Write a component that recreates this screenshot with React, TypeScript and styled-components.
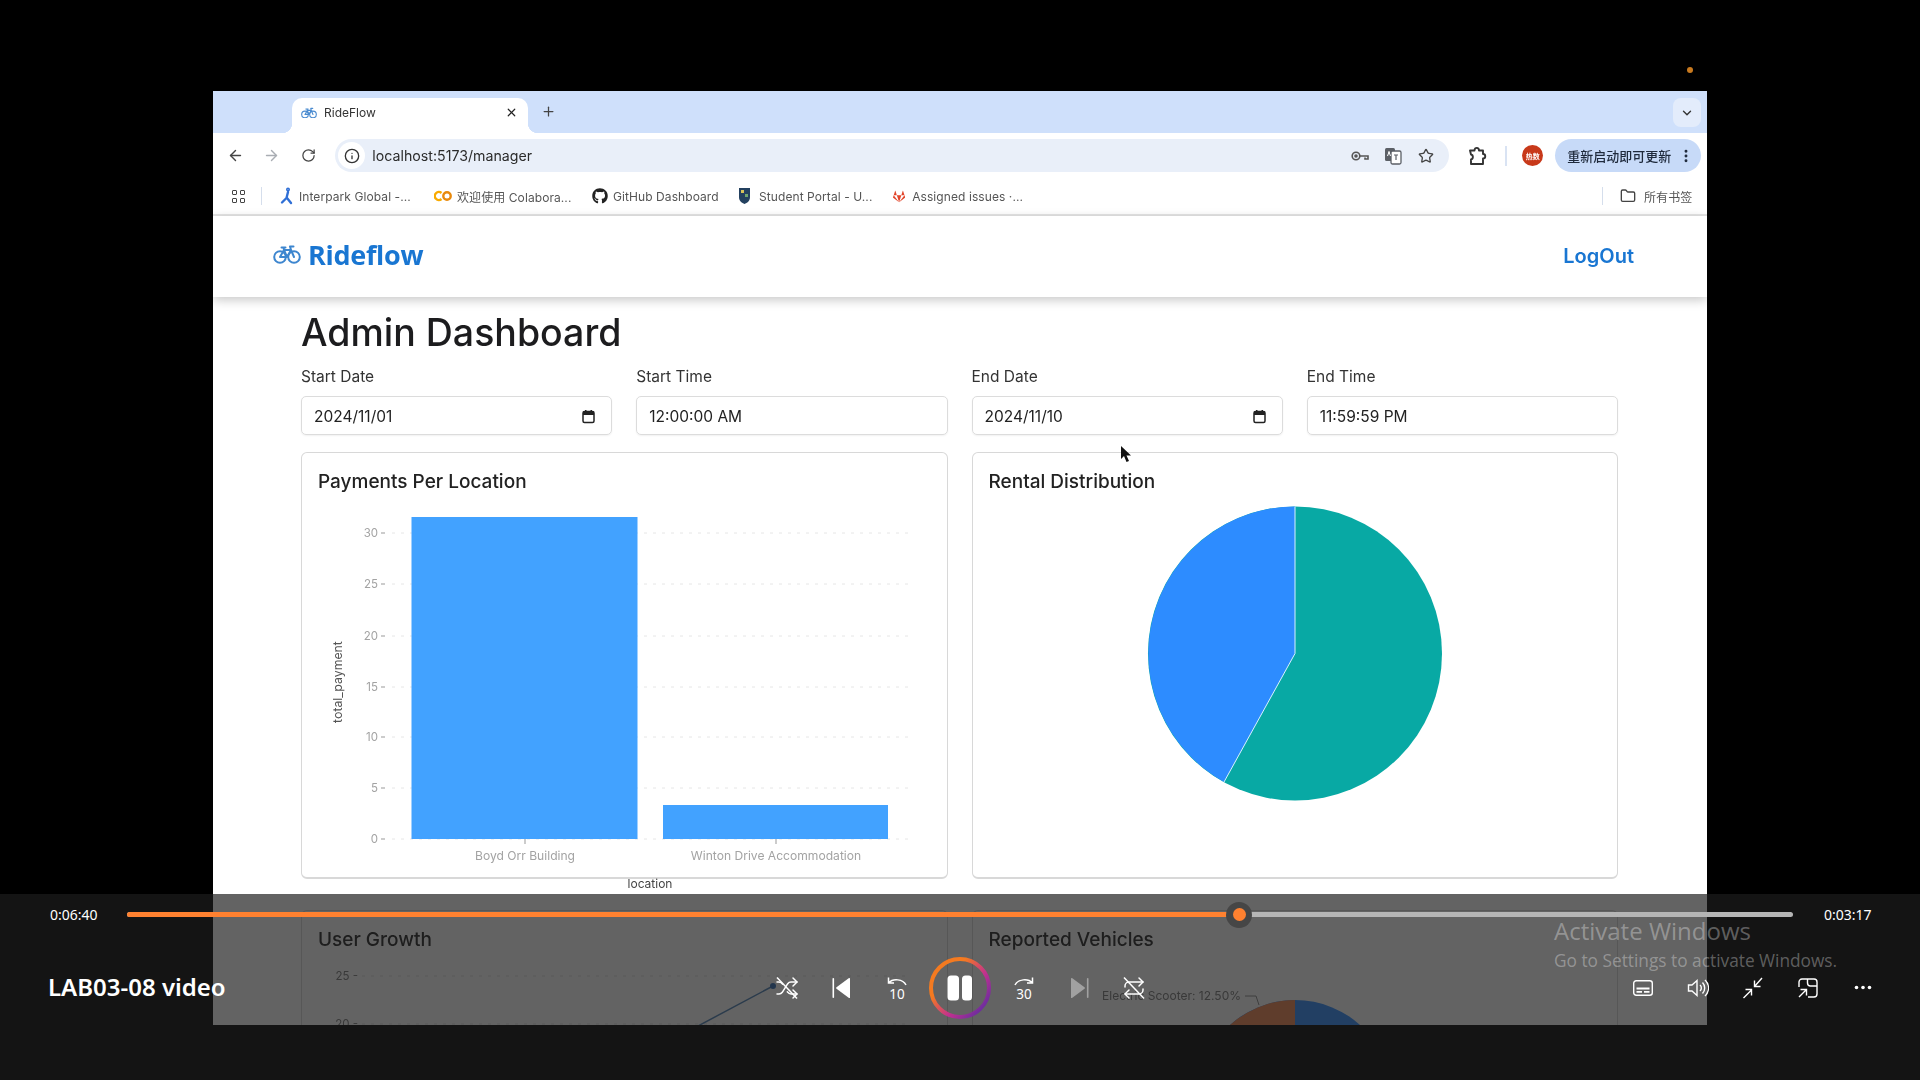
import type { ReactNode } from "react";
import { createGlobalStyle, styled } from "styled-components";
import {
  ArrowLeft,
  ArrowRight,
  ChevronDown,
  EllipsisVertical,
  Folder,
  Info,
  Plus,
  Repeat,
  RotateCw,
  Shuffle,
  Star,
  X,
} from "lucide-react";
import { FaGithub, FaGitlab } from "react-icons/fa";

const GlobalStyle = createGlobalStyle`
  html, body {
    margin: 0;
    height: 100%;
    overflow: hidden;
    background: #000;
  }
  * { box-sizing: border-box; }
`;

const Stage = styled.div`
  position: relative;
  width: 1920px;
  height: 1080px;
  padding: 91px 0 0 213px;
  background: #000;
  overflow: hidden;
`;

const RecordingDot = styled.span`
  position: absolute;
  left: 1687px;
  top: 67px;
  width: 6px;
  height: 6px;
  border-radius: 50%;
  background: #c97a1f;
`;

const BrowserFrame = styled.div`
  width: 1494px;
  height: 934px;
  background: #fff;
  overflow: hidden;
  filter: blur(0.6px);
  font-family: Inter, "Liberation Sans", "Noto Sans CJK SC", sans-serif;
`;

const TabStrip = styled.div`
  display: flex;
  align-items: flex-end;
  height: 42px;
  padding-left: 79px;
  background: #cfe0fb;
  position: relative;
`;

const Tab = styled.div`
  position: relative;
  display: flex;
  align-items: center;
  width: 236px;
  height: 35px;
  padding: 0 10px 6px 9px;
  background: #fff;
  border-radius: 10px 10px 0 0;
  font-size: 12px;
  color: #333;

  &::before,
  &::after {
    content: "";
    position: absolute;
    bottom: 0;
    width: 10px;
    height: 10px;
  }
  &::before {
    left: -10px;
    background: radial-gradient(circle at 0 0, transparent 10px, #fff 10.5px);
  }
  &::after {
    right: -10px;
    background: radial-gradient(circle at 100% 0, transparent 10px, #fff 10.5px);
  }
`;

const TabTitle = styled.span`
  flex: 1;
  margin-left: 7px;
`;

const NewTab = styled.span`
  display: flex;
  align-self: center;
  margin: 0 0 1px 13px;
  color: #444;
`;

const TabMenu = styled.span`
  display: flex;
  align-items: center;
  justify-content: center;
  position: absolute;
  right: 6px;
  top: 7px;
  width: 28px;
  height: 29px;
  border-radius: 8px;
  background: #e3ecfb;
  color: #333;
`;

const Toolbar = styled.div`
  display: flex;
  align-items: center;
  height: 45px;
  padding: 0 6px 0 4px;
  background: #fff;
`;

const NavButton = styled.span<{ $dim?: boolean }>`
  display: flex;
  align-items: center;
  justify-content: center;
  width: 36.5px;
  color: ${(p) => (p.$dim ? "#a9adb3" : "#444")};
`;

const Omnibox = styled.div`
  display: flex;
  align-items: center;
  width: 1116px;
  height: 33px;
  margin-left: 9px;
  padding: 0 7px 0 3px;
  border-radius: 17px;
  background: #e9eff9;
  font-size: 14.2px;
  color: #2b2b2b;
`;

const SiteInfo = styled.span`
  display: flex;
  align-items: center;
  justify-content: center;
  width: 27px;
  height: 27px;
  border-radius: 50%;
  background: #fff;
  color: #333;
`;

const Url = styled.span`
  flex: 1;
  margin-left: 7px;
`;

const OmniIcon = styled.span`
  display: flex;
  align-items: center;
  justify-content: center;
  width: 33px;
  color: #444;
`;

const ToolbarIcon = styled.span`
  display: flex;
  margin-left: 18px;
  color: #333;
`;

const ToolbarDivider = styled.span`
  width: 2px;
  height: 20px;
  margin: 0 15px 0 18px;
  background: #d9e3f3;
`;

const Avatar = styled.span`
  display: flex;
  align-items: center;
  justify-content: center;
  width: 21px;
  height: 21px;
  border-radius: 50%;
  background: #c8391a;
  color: #fff;
  font-size: 7px;
  font-weight: 700;
`;

const UpdatePill = styled.div`
  display: flex;
  align-items: center;
  justify-content: space-between;
  width: 146px;
  height: 33px;
  margin-left: 12px;
  padding: 0 7px 0 12px;
  border-radius: 17px;
  background: #c7daf8;
  color: #1f2a3c;
  font-size: 13px;
  font-weight: 500;
`;

const BookmarksBar = styled.div`
  display: flex;
  align-items: center;
  height: 38px;
  padding: 0 14px 0 19px;
  border-bottom: 2px solid #e5e5e5;
  background: #fff;
  font-size: 12px;
  letter-spacing: 0.08px;
  color: #555;
`;

const AppsGrid = styled.span`
  display: grid;
  grid-template-columns: 5px 5px;
  gap: 3px;
`;

const AppsCell = styled.span`
  width: 5px;
  height: 5px;
  border: 1.2px solid #444;
  border-radius: 1px;
`;

const BarDivider = styled.span<{ $right?: boolean }>`
  width: 1px;
  height: 18px;
  margin: ${(p) => (p.$right ? "0 17px 0 auto" : "0 18px 0 16px")};
  background: #d5deec;
`;

const Bookmark = styled.span<{ $width: number; $gap?: number }>`
  display: flex;
  align-items: center;
  gap: ${(p) => p.$gap ?? 5}px;
  width: ${(p) => p.$width}px;
  white-space: nowrap;
`;

const NavBar = styled.header`
  position: relative;
  z-index: 1;
  display: flex;
  align-items: center;
  justify-content: space-between;
  height: 81px;
  padding: 0 73px 5px 60px;
  background: #fff;
  box-shadow: 0 3px 10px rgba(0, 0, 0, 0.22);
`;

const Brand = styled.div`
  display: flex;
  align-items: center;
  gap: 7px;
  color: #1976d2;
  font-family: "Open Sans", sans-serif;
  font-size: 27px;
  font-weight: 700;
  letter-spacing: -0.3px;
`;

const LogOut = styled.span`
  margin-top: 4px;
  color: #1976d2;
  font-family: Inter, sans-serif;
  font-size: 20px;
  font-weight: 600;
`;

const Main = styled.main`
  padding: 13px 89px 0 88px;
`;

const Heading = styled.h1`
  margin: 0 0 11px;
  color: #1c1c1e;
  font-size: 37.5px;
  line-height: 46px;
  font-weight: 500;
`;

const FilterRow = styled.div`
  display: grid;
  grid-template-columns: repeat(4, 1fr);
  gap: 24px;
  margin-bottom: 17px;
`;

const FieldLabel = styled.div`
  height: 20px;
  margin-bottom: 9px;
  color: #333;
  font-size: 15.5px;
  line-height: 20px;
`;

const FieldBox = styled.div`
  display: flex;
  align-items: center;
  justify-content: space-between;
  height: 39px;
  padding: 1px 15px 0 12px;
  border: 1px solid #dcdcdc;
  border-radius: 5px;
  box-shadow: 0 1px 2px rgba(0, 0, 0, 0.06);
  color: #222;
  font-size: 15.5px;
`;

const CardGrid = styled.div`
  display: grid;
  grid-template-columns: 1fr 1fr;
  column-gap: 24px;
  row-gap: 31px;
`;

const Card = styled.section`
  height: 427px;
  padding: 17px 16px 0;
  border: 1px solid #d8d8d8;
  border-bottom-width: 2px;
  border-radius: 6px;
  background: #fff;
`;

const CardTitle = styled.h2`
  margin: 0 0 7px;
  color: #222;
  font-size: 19px;
  line-height: 24px;
  font-weight: 500;
`;

const ChartSvg = styled.svg`
  display: block;
  width: 612px;
  height: 360px;
  overflow: visible;
  font-family: Inter, "Liberation Sans", sans-serif;
`;

const MouseCursor = styled.svg`
  position: absolute;
  left: 1120px;
  top: 445px;
`;

const PlayerBar = styled.div`
  position: absolute;
  left: 0;
  right: 0;
  bottom: 0;
  height: 186px;
  background: rgba(29, 29, 29, 0.69);
  font-family: "Noto Sans", "Open Sans", sans-serif;
  color: #fff;
`;

const SeekRow = styled.div`
  display: flex;
  align-items: center;
  height: 41px;
  padding-left: 50px;
`;

const TimeLabel = styled.span`
  width: 77px;
  font-size: 14px;
  white-space: nowrap;
`;

const SeekTrack = styled.div`
  position: relative;
  width: 1666px;
  height: 5px;
  margin-right: 31px;
  border-radius: 3px;
  background: #b5b5b5;
`;

const SeekFill = styled.div`
  height: 100%;
  border-radius: 3px;
  background: #ff8130;
`;

const SeekThumb = styled.span`
  position: absolute;
  top: 50%;
  width: 26px;
  height: 26px;
  margin: -13px 0 0 -13px;
  border-radius: 50%;
  background: #464646;

  &::after {
    content: "";
    position: absolute;
    inset: 6.5px;
    border-radius: 50%;
    background: #ff8130;
  }
`;

const ControlRow = styled.div`
  display: grid;
  grid-template-columns: 1fr auto 1fr;
  align-items: center;
  height: 105px;
`;

const VideoTitle = styled.div`
  padding: 0 0 2px 48px;
  font-size: 24px;
  font-weight: 600;
  white-space: nowrap;
`;

const ControlGroup = styled.div<{ $end?: boolean }>`
  display: flex;
  align-items: center;
  justify-content: ${(p) => (p.$end ? "flex-end" : "center")};
  padding-right: ${(p) => (p.$end ? "30px" : "0")};
`;

const IconButton = styled.span<{ $dim?: boolean }>`
  display: flex;
  align-items: center;
  justify-content: center;
  width: 55px;
  height: 40px;
  color: ${(p) => (p.$dim ? "rgba(255,255,255,0.4)" : "#fff")};
`;

const PauseButton = styled.span`
  display: flex;
  align-items: center;
  justify-content: center;
  width: 62px;
  height: 62px;
  margin: 0 5px;
`;

const Watermark = styled.div`
  position: absolute;
  left: 1554px;
  top: 915px;
  font-family: "Open Sans", "Noto Sans", sans-serif;
  color: rgba(255, 255, 255, 0.32);
  pointer-events: none;
`;

const WatermarkTitle = styled.div`
  font-size: 24px;
  line-height: 32px;
`;

const WatermarkText = styled.div`
  margin-top: 3px;
  font-size: 17.3px;
  line-height: 22px;
`;

const filters = [
  { label: "Start Date", value: "2024/11/01", calendar: true },
  { label: "Start Time", value: "12:00:00 AM", calendar: false },
  { label: "End Date", value: "2024/11/10", calendar: true },
  { label: "End Time", value: "11:59:59 PM", calendar: false },
];

const yTicks = [
  { label: "30", y: 32 },
  { label: "25", y: 83 },
  { label: "20", y: 135 },
  { label: "15", y: 186 },
  { label: "10", y: 236 },
  { label: "5", y: 287 },
  { label: "0", y: 338 },
];

const seekProgress = 0.6676;

const CalendarIcon = () => (
  <svg width="15" height="15" viewBox="0 0 15 15" fill="none">
    <rect x="2" y="2.5" width="11" height="11" rx="1.5" stroke="#222" strokeWidth="1.5" />
    <rect x="2" y="2.5" width="11" height="3.5" fill="#222" />
    <rect x="4" y="1" width="1.5" height="2" fill="#222" />
    <rect x="9.5" y="1" width="1.5" height="2" fill="#222" />
  </svg>
);

const BarChart = () => (
  <ChartSvg viewBox="0 0 612 360">
    {yTicks.map((t) => (
      <g key={t.label}>
        <line x1="74" x2="592" y1={t.y} y2={t.y} stroke="#e6e6e6" strokeDasharray="3 6" />
        <line x1="63" x2="67" y1={t.y} y2={t.y} stroke="#999" />
        <text x="60" y={t.y + 4} textAnchor="end" fontSize="11.5" fill="#a3a3a3">
          {t.label}
        </text>
      </g>
    ))}
    <rect x="93.5" y="16" width="226" height="322" fill="#42a2ff" />
    <rect x="345" y="304" width="225" height="34" fill="#42a2ff" />
    <line x1="207" x2="207" y1="338" y2="343" stroke="#999" />
    <line x1="458" x2="458" y1="338" y2="343" stroke="#999" />
    <text x="207" y="359" textAnchor="middle" fontSize="12.1" fill="#a3a3a3">
      Boyd Orr Building
    </text>
    <text x="458" y="359" textAnchor="middle" fontSize="12.1" fill="#a3a3a3">
      Winton Drive Accommodation
    </text>
    <text x="332" y="387" textAnchor="middle" fontSize="12" fill="#444">
      location
    </text>
    <text
      x="24"
      y="181"
      textAnchor="middle"
      fontSize="12.3"
      fill="#555"
      transform="rotate(-90 24 181)"
    >
      total_payment
    </text>
  </ChartSvg>
);

const RentalPie = () => (
  <ChartSvg viewBox="0 0 612 360">
    <circle cx="306" cy="152.5" r="147" fill="#08a9a4" />
    <path d="M306 152.5 L306 5.5 A147 147 0 0 0 235 281 Z" fill="#2d8cff" />
    <path d="M235 281 L306 152.5 L306 5.5" fill="none" stroke="#d9f1ff" strokeWidth="1" />
  </ChartSvg>
);

const GrowthChart = () => (
  <ChartSvg viewBox="0 0 612 360">
    <text x="40" y="21" textAnchor="end" fontSize="11.5" fill="#777">25 -</text>
    <line x1="44" x2="592" y1="17" y2="17" stroke="#ddd" strokeDasharray="3 6" />
    <text x="40" y="69" textAnchor="end" fontSize="11.5" fill="#777">20 -</text>
    <line x1="44" x2="592" y1="65" y2="65" stroke="#ddd" strokeDasharray="3 6" />
    <line x1="380" x2="455" y1="67" y2="27" stroke="#4a7fb5" strokeWidth="1.5" />
    <circle cx="455" cy="27" r="3" fill="#2d6cb5" />
  </ChartSvg>
);

const VehiclesPie = () => (
  <ChartSvg viewBox="0 0 612 360">
    <circle cx="306" cy="138" r="97" fill="#2d8cff" />
    <path d="M306 138 L306 41 A97 97 0 0 0 237.4 69.4 Z" fill="#f2844d" />
    <text x="252" y="41" textAnchor="end" fontSize="12" fill="#777">
      Electric Scooter: 12.50%
    </text>
    <path d="M256 37 H267 L270 46" fill="none" stroke="#888" />
  </ChartSvg>
);

const BikeIcon = ({ width, color }: { width: number; color: string }) => (
  <svg
    width={width}
    height={(width * 20) / 28}
    viewBox="0 0 28 20"
    fill="none"
    stroke={color}
    strokeWidth="2"
    strokeLinejoin="round"
    strokeLinecap="round"
  >
    <circle cx="7" cy="13" r="5.8" />
    <circle cx="21" cy="13" r="5.8" />
    <path d="M7 13 L11 6 H18 L21 13 M11 6 L14 13 H7 M14 13 L18 6 L17 2.5 H20.5 M8.5 3.5 H12.5 M10.5 3.5 L11 6" />
  </svg>
);

const InterparkIcon = () => (
  <svg width="14" height="18" viewBox="0 0 14 18" fill="none" stroke="#2f6fd6" strokeWidth="2.4" strokeLinecap="round">
    <circle cx="8" cy="2.5" r="0.8" />
    <path d="M8 5 L6.5 11 L2 15.5 M7 11 L11 16" />
  </svg>
);

const ColabIcon = () => (
  <svg width="18" height="12" viewBox="0 0 18 12" fill="none" strokeWidth="2.4">
    <path d="M7.5 3 A4 4 0 1 0 7.5 9" stroke="#f9ab00" />
    <circle cx="13" cy="6" r="3.7" stroke="#e8890c" />
  </svg>
);

const CrestIcon = () => (
  <svg width="13" height="18" viewBox="0 0 13 18">
    <path d="M1 1 H12 V10 C12 14 9 16 6.5 17 C4 16 1 14 1 10 Z" fill="#23405f" />
    <rect x="3" y="3" width="3" height="3" fill="#d9c35a" />
    <rect x="7" y="7" width="3" height="3" fill="#6fa56f" />
  </svg>
);

const KeyIcon = () => (
  <svg width="18" height="12" viewBox="0 0 18 12" fill="none" stroke="#555" strokeWidth="1.6">
    <circle cx="5" cy="6" r="3.8" />
    <circle cx="5" cy="6" r="1" fill="#555" />
    <path d="M9 6 H17 V9 H14 V7.5" />
  </svg>
);

const TranslateIcon = () => (
  <svg width="18" height="18" viewBox="0 0 18 18">
    <rect x="1" y="1" width="10" height="13" rx="1.5" fill="#5b5f66" />
    <rect x="7" y="4" width="10" height="13" rx="1.5" fill="#fff" stroke="#5b5f66" strokeWidth="1.3" />
    <path d="M10 8 H14 M12 8 V13" stroke="#5b5f66" strokeWidth="1.2" />
    <path d="M4 5 L6 5 M3.5 9 L5 5 L6.5 9" stroke="#fff" strokeWidth="1" fill="none" />
  </svg>
);

const ExtensionIcon = () => (
  <svg width="20" height="20" viewBox="0 0 20 20" fill="none" stroke="currentColor" strokeWidth="1.9" strokeLinejoin="round">
    <path d="M3 4.5 H7.5 C7.5 1 12 1 12 4.5 H16 V8 C19 8 19 12.5 16 12.5 V18 H4 V13.5 C6.5 13 6.5 9 4 8.5 Z" />
  </svg>
);

const PrevIcon = ({ flip }: { flip?: boolean }) => (
  <svg
    width="20"
    height="22"
    viewBox="0 0 20 22"
    fill="currentColor"
    style={flip ? { transform: "scaleX(-1)" } : undefined}
  >
    <rect x="0.5" y="1" width="1.6" height="20" rx="0.8" />
    <path d="M18 1.5 V20.5 C18 21 17.5 21.2 17 20.9 L4.5 11.8 C4 11.4 4 10.6 4.5 10.2 L17 1.1 C17.5 0.8 18 1 18 1.5 Z" />
  </svg>
);

const SkipIcon = ({ seconds, forward }: { seconds: string; forward?: boolean }) => (
  <svg width="24" height="28" viewBox="0 0 24 28" fill="none" stroke="currentColor" strokeWidth="1.5">
    {forward ? (
      <path d="M3 11 C6 5 16 4 20.5 9 M20.5 3.5 V9 H15" />
    ) : (
      <path d="M21 11 C18 5 8 4 3.5 9 M3.5 3.5 V9 H9" />
    )}
    <text
      x="12"
      y="25"
      textAnchor="middle"
      fontSize="13.5"
      fill="currentColor"
      stroke="none"
      fontFamily="Noto Sans, sans-serif"
    >
      {seconds}
    </text>
  </svg>
);

const Struck = ({ children }: { children: ReactNode }) => (
  <svg width="24" height="24" viewBox="0 0 24 24" fill="none" stroke="currentColor" strokeWidth="1.5">
    {children}
    <line x1="2" y1="1.5" x2="22" y2="22.5" />
  </svg>
);

const PauseRing = () => (
  <svg width="62" height="62" viewBox="0 0 62 62">
    <defs>
      <linearGradient id="ring" x1="0.1" y1="0.15" x2="0.9" y2="0.85">
        <stop offset="0.25" stopColor="#f47a20" />
        <stop offset="0.65" stopColor="#c2308f" />
        <stop offset="1" stopColor="#6e2d9e" />
      </linearGradient>
    </defs>
    <circle cx="31" cy="31" r="29" fill="none" stroke="url(#ring)" strokeWidth="4" />
    <rect x="18.5" y="18.5" width="11.5" height="25" rx="3.5" fill="#fff" />
    <rect x="33" y="18.5" width="10" height="25" rx="3.5" fill="#fff" />
  </svg>
);

const SubtitleIcon = () => (
  <svg width="20" height="16" viewBox="0 0 20 16" fill="none" stroke="currentColor" strokeWidth="1.4">
    <rect x="0.7" y="0.7" width="18.6" height="14.6" rx="2.5" />
    <path d="M3.5 8.5 H16.5 M3.5 11.8 H9 M11 11.8 H16.5" strokeWidth="1.8" />
  </svg>
);

const SpeakerIcon = () => (
  <svg width="22" height="22" viewBox="0 0 22 22" fill="none" stroke="currentColor" strokeWidth="1.4">
    <path d="M1.5 8 H5 L10 3.5 V18.5 L5 14 H1.5 Z" />
    <path d="M13 8 A4 4 0 0 1 13 14 M15.5 5.5 A8 8 0 0 1 15.5 16.5 M18 3 A11 11 0 0 1 18 19" />
  </svg>
);

const CollapseIcon = () => (
  <svg width="22" height="22" viewBox="0 0 22 22" fill="none" stroke="currentColor" strokeWidth="1.4">
    <path d="M20 1 L12.5 9.5 M12.5 3.5 V9.5 H18.5" />
    <path d="M1.5 21 L9.5 13 M3.5 12.5 H9.5 V18.5" />
  </svg>
);

const MiniPlayerIcon = () => (
  <svg width="20" height="20" viewBox="0 0 20 20" fill="none" stroke="currentColor" strokeWidth="1.4">
    <path d="M1 9 V4 A3 3 0 0 1 4 1 H16 A3 3 0 0 1 19 4 V16 A3 3 0 0 1 16 19 H10" />
    <path d="M9.5 1 V5 A3 3 0 0 0 12.5 8 H19" />
    <path d="M1 19 L8 12 M2.5 11.5 H8.5 V17.5" />
  </svg>
);

const MoreDots = () => (
  <svg width="18" height="5" viewBox="0 0 18 5" fill="currentColor">
    <circle cx="2.5" cy="2.5" r="1.8" />
    <circle cx="9" cy="2.5" r="1.8" />
    <circle cx="15.5" cy="2.5" r="1.8" />
  </svg>
);

const App = () => {
  return (
    <Stage>
      <GlobalStyle />
      <RecordingDot />
      <BrowserFrame>
        <TabStrip>
          <Tab>
            <BikeIcon width={16} color="#4a8bd0" />
            <TabTitle>RideFlow</TabTitle>
            <X size={13} color="#222" strokeWidth={2.2} />
          </Tab>
          <NewTab>
            <Plus size={15} strokeWidth={2} />
          </NewTab>
          <TabMenu>
            <ChevronDown size={14} strokeWidth={2.4} />
          </TabMenu>
        </TabStrip>

        <Toolbar>
          <NavButton>
            <ArrowLeft size={17} />
          </NavButton>
          <NavButton $dim>
            <ArrowRight size={17} />
          </NavButton>
          <NavButton>
            <RotateCw size={15} />
          </NavButton>
          <Omnibox>
            <SiteInfo>
              <Info size={16} />
            </SiteInfo>
            <Url>localhost:5173/manager</Url>
            <OmniIcon>
              <KeyIcon />
            </OmniIcon>
            <OmniIcon>
              <TranslateIcon />
            </OmniIcon>
            <OmniIcon>
              <Star size={16} strokeWidth={2} />
            </OmniIcon>
          </Omnibox>
          <ToolbarIcon>
            <ExtensionIcon />
          </ToolbarIcon>
          <ToolbarDivider />
          <Avatar>热数</Avatar>
          <UpdatePill>
            重新启动即可更新
            <EllipsisVertical size={16} strokeWidth={2.4} />
          </UpdatePill>
        </Toolbar>

        <BookmarksBar>
          <AppsGrid>
            <AppsCell />
            <AppsCell />
            <AppsCell />
            <AppsCell />
          </AppsGrid>
          <BarDivider />
          <Bookmark $width={154}>
            <InterparkIcon /> Interpark Global -...
          </Bookmark>
          <Bookmark $width={158}>
            <ColabIcon /> 欢迎使用 Colabora...
          </Bookmark>
          <Bookmark $width={146}>
            <FaGithub size={16} color="#222" /> GitHub Dashboard
          </Bookmark>
          <Bookmark $width={155} $gap={8}>
            <CrestIcon /> Student Portal - U...
          </Bookmark>
          <Bookmark $width={130} $gap={7}>
            <FaGitlab size={15} color="#e24329" /> Assigned issues ·...
          </Bookmark>
          <BarDivider $right />
          <Bookmark $width={73} $gap={8}>
            <Folder size={16} color="#444" /> 所有书签
          </Bookmark>
        </BookmarksBar>

        <NavBar>
          <Brand>
            <BikeIcon width={28} color="#3d86cf" />
            Rideflow
          </Brand>
          <LogOut>LogOut</LogOut>
        </NavBar>

        <Main>
          <Heading>Admin Dashboard</Heading>
          <FilterRow>
            {filters.map((f) => (
              <div key={f.label}>
                <FieldLabel>{f.label}</FieldLabel>
                <FieldBox>
                  {f.value}
                  {f.calendar && <CalendarIcon />}
                </FieldBox>
              </div>
            ))}
          </FilterRow>
          <CardGrid>
            <Card>
              <CardTitle>Payments Per Location</CardTitle>
              <BarChart />
            </Card>
            <Card>
              <CardTitle>Rental Distribution</CardTitle>
              <RentalPie />
            </Card>
            <Card>
              <CardTitle>User Growth</CardTitle>
              <GrowthChart />
            </Card>
            <Card>
              <CardTitle>Reported Vehicles</CardTitle>
              <VehiclesPie />
            </Card>
          </CardGrid>
        </Main>
      </BrowserFrame>

      <MouseCursor width="12" height="18" viewBox="0 0 12 18">
        <path d="M1 1 V14 L4 11 L6.5 17 L9 16 L6.5 10.5 H11 Z" fill="#111" />
      </MouseCursor>

      <PlayerBar>
        <SeekRow>
          <TimeLabel>0:06:40</TimeLabel>
          <SeekTrack>
            <SeekFill style={{ width: `${seekProgress * 100}%` }} />
            <SeekThumb style={{ left: `${seekProgress * 100}%` }} />
          </SeekTrack>
          <TimeLabel>0:03:17</TimeLabel>
        </SeekRow>
        <ControlRow>
          <VideoTitle>LAB03-08 video</VideoTitle>
          <ControlGroup>
            <IconButton>
              <Struck>
                <Shuffle size={24} strokeWidth={1.5} />
              </Struck>
            </IconButton>
            <IconButton>
              <PrevIcon />
            </IconButton>
            <IconButton>
              <SkipIcon seconds="10" />
            </IconButton>
            <PauseButton>
              <PauseRing />
            </PauseButton>
            <IconButton>
              <SkipIcon seconds="30" forward />
            </IconButton>
            <IconButton $dim>
              <PrevIcon flip />
            </IconButton>
            <IconButton>
              <Struck>
                <Repeat size={24} strokeWidth={1.5} />
              </Struck>
            </IconButton>
          </ControlGroup>
          <ControlGroup $end>
            <IconButton>
              <SubtitleIcon />
            </IconButton>
            <IconButton>
              <SpeakerIcon />
            </IconButton>
            <IconButton>
              <CollapseIcon />
            </IconButton>
            <IconButton>
              <MiniPlayerIcon />
            </IconButton>
            <IconButton>
              <MoreDots />
            </IconButton>
          </ControlGroup>
        </ControlRow>
      </PlayerBar>

      <Watermark>
        <WatermarkTitle>Activate Windows</WatermarkTitle>
        <WatermarkText>Go to Settings to activate Windows.</WatermarkText>
      </Watermark>
    </Stage>
  );
};

export default App;
